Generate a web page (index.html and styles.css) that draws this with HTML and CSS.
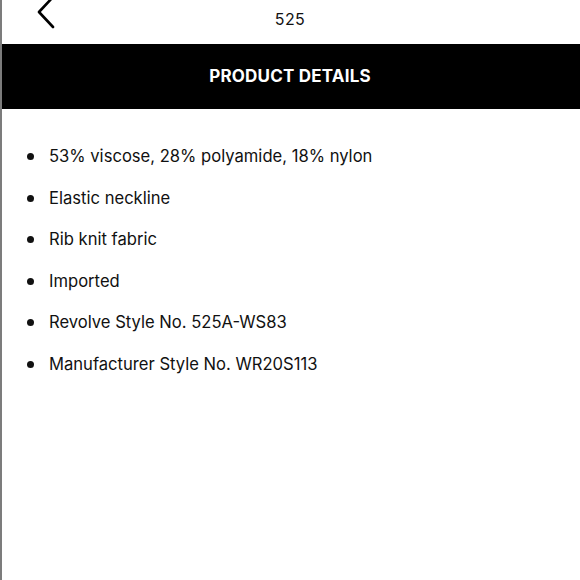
FILE: index.html
```html
<!DOCTYPE html>
<html>
<head>
<meta charset="utf-8">
<link rel="stylesheet" href="styles.css">
</head>
<body>
<div class="page">
  <header class="topbar">
    <div class="back">
      <svg width="22" height="34" viewBox="0 0 22 34"><path d="M18 1 L4 16 L18 31" fill="none" stroke="#000" stroke-width="2.6" stroke-linecap="round" stroke-linejoin="round"/></svg>
    </div>
    <div class="title">525</div>
    <div></div>
  </header>
  <div class="section-bar">PRODUCT DETAILS</div>
  <ul class="details">
    <li>53% viscose, 28% polyamide, 18% nylon</li>
    <li>Elastic neckline</li>
    <li>Rib knit fabric</li>
    <li>Imported</li>
    <li>Revolve Style No. 525A-WS83</li>
    <li>Manufacturer Style No. WR20S113</li>
  </ul>
</div>
</body>
</html>
```
FILE: styles.css
```css
html, body {
  margin: 0;
  padding: 0;
  background: #fff;
}
.page {
  height: 580px;
  border-left: 2px solid #7c7c7c;
  box-sizing: border-box;
  font-family: "Inter", "Liberation Sans", sans-serif;
  color: #111;
  overflow: hidden;
}
.topbar {
  height: 44px;
  display: grid;
  grid-template-columns: 1fr auto 1fr;
  align-items: start;
}
.back {
  padding-left: 33px;
  margin-top: -4px;
}
.back svg { display: block; }
.title {
  font-size: 16px;
  line-height: 16px;
  margin-top: 11px;
  letter-spacing: 0.4px;
  margin-left: -2px;
}
.section-bar {
  height: 65px;
  background: #000;
  color: #fff;
  font-weight: 700;
  font-size: 17px;
  letter-spacing: 0.2px;
  display: flex;
  align-items: center;
  justify-content: center;
  margin-left: -2px;
  padding-bottom: 2px;
  box-sizing: border-box;
}
.details {
  list-style: none;
  margin: 0;
  padding: 37px 0 0 47px;
}
.details li {
  position: relative;
  font-size: 16.6px;
  line-height: 20px;
  margin-bottom: 21.6px;
  letter-spacing: 0;
}
.details li::before {
  content: "";
  position: absolute;
  left: -22px;
  top: 7px;
  width: 7px;
  height: 7px;
  border-radius: 50%;
  background: #111;
}
```
